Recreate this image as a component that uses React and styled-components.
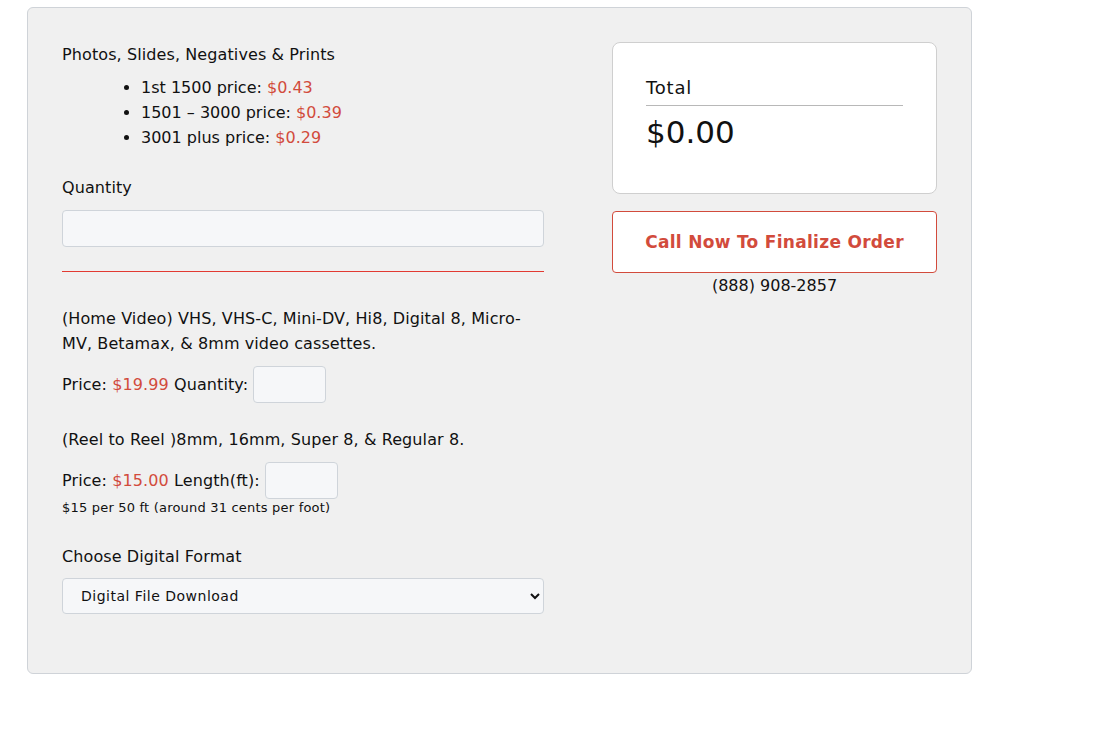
import React from "react";
import styled, { createGlobalStyle } from "styled-components";

const red = "#d24b3c";
const font = `"DejaVu Sans", "Noto Sans", sans-serif`;

const Global = createGlobalStyle`
  html, body { margin: 0; padding: 0; background: #fff; }
  body { font-family: ${font}; color: #111; }
  * { box-sizing: border-box; }
`;

const Page = styled.div`
  padding: 7px 0 0 27px;
`;

const Card = styled.div`
  width: 945px;
  background: #f0f0f0;
  border: 1px solid #cfd3d8;
  border-radius: 6px;
  padding: 34px 34px 59px 34px;
  display: grid;
  grid-template-columns: 482px 325px;
  column-gap: 68px;
  align-items: start;
`;

const LeftCol = styled.div`
  display: flex;
  flex-direction: column;
  font-size: 16px;
  letter-spacing: 0.1px;
  line-height: 25px;
`;

const Text = styled.div`
  margin-top: ${(p) => p.$mt || 0}px;
`;

const Price = styled.span`
  color: ${red};
`;

const List = styled.ul`
  margin: 8px 0 0 0;
  padding-left: 79px;
  letter-spacing: 0;
  li { line-height: 25px; }
`;

const WideInput = styled.input`
  margin-top: ${(p) => p.$mt || 0}px;
  width: 100%;
  height: ${(p) => p.$h || 37}px;
  background: #f6f7f9;
  border: 1px solid #cfd4da;
  border-radius: 4px;
`;

const Rule = styled.div`
  margin-top: 24px;
  height: 2px;
  border-top: 1px solid #e23a32;
  width: 100%;
`;

const Row = styled.div`
  margin-top: ${(p) => p.$mt || 0}px;
  display: flex;
  align-items: center;
  gap: 5px;
`;

const SmallInput = styled.input`
  width: 73px;
  height: 37px;
  background: #f6f7f9;
  border: 1px solid #cfd4da;
  border-radius: 4px;
`;

const Note = styled.div`
  font-size: 13px;
  letter-spacing: 0.2px;
  line-height: 18px;
`;

const Select = styled.select`
  margin-top: 9px;
  width: 100%;
  height: 36px;
  padding: 0 12px 0 14px;
  font-family: ${font};
  font-size: 14px;
  letter-spacing: 0.5px;
  color: #111;
  background: #f6f7f9;
  border: 1px solid #cfd4da;
  border-radius: 4px;
`;

const RightCol = styled.div`
  display: flex;
  flex-direction: column;
`;

const TotalBox = styled.div`
  height: 152px;
  background: #fff;
  border: 1px solid #cfcfcf;
  border-radius: 8px;
  padding: 32px 33px 0 33px;
`;

const TotalLabel = styled.div`
  font-size: 18px;
  letter-spacing: 0.8px;
  line-height: 25px;
  padding-bottom: 5px;
  border-bottom: 1px solid #b8b8b8;
`;

const TotalValue = styled.div`
  font-size: 31px;
  line-height: 44px;
  margin-top: 4px;
`;

const CallButton = styled.button`
  margin-top: 17px;
  height: 62px;
  width: 100%;
  background: #fff;
  border: 1px solid ${red};
  border-radius: 4px;
  color: ${red};
  font-family: ${font};
  font-weight: 700;
  font-size: 17px;
  letter-spacing: 0.3px;
  cursor: pointer;
`;

const Phone = styled.div`
  text-align: center;
  font-size: 16px;
  line-height: 25px;
`;

export default function App() {
  return (
    <Page>
      <Global />
      <Card>
        <LeftCol>
          <Text>Photos, Slides, Negatives &amp; Prints</Text>
          <List>
            <li>1st 1500 price: <Price>$0.43</Price></li>
            <li>1501 – 3000 price: <Price>$0.39</Price></li>
            <li>3001 plus price: <Price>$0.29</Price></li>
          </List>
          <Text $mt={25}>Quantity</Text>
          <WideInput $mt={10} type="text" />
          <Rule />
          <Text $mt={33}>
            (Home Video) VHS, VHS-C, Mini-DV, Hi8, Digital 8, Micro-MV, Betamax, &amp; 8mm video cassettes.
          </Text>
          <Row $mt={10}>
            <span>Price: <Price>$19.99</Price> Quantity:</span>
            <SmallInput type="text" />
          </Row>
          <Text $mt={24}>(Reel to Reel )8mm, 16mm, Super 8, &amp; Regular 8.</Text>
          <Row $mt={10}>
            <span>Price: <Price>$15.00</Price> Length(ft):</span>
            <SmallInput type="text" />
          </Row>
          <Note>$15 per 50 ft (around 31 cents per foot)</Note>
          <Text $mt={27}>Choose Digital Format</Text>
          <Select defaultValue="dl">
            <option value="dl">Digital File Download</option>
            <option value="usb">USB Drive</option>
            <option value="dvd">DVD</option>
          </Select>
        </LeftCol>
        <RightCol>
          <TotalBox>
            <TotalLabel>Total</TotalLabel>
            <TotalValue>$0.00</TotalValue>
          </TotalBox>
          <CallButton>Call Now To Finalize Order</CallButton>
          <Phone>(888) 908-2857</Phone>
        </RightCol>
      </Card>
    </Page>
  );
}
